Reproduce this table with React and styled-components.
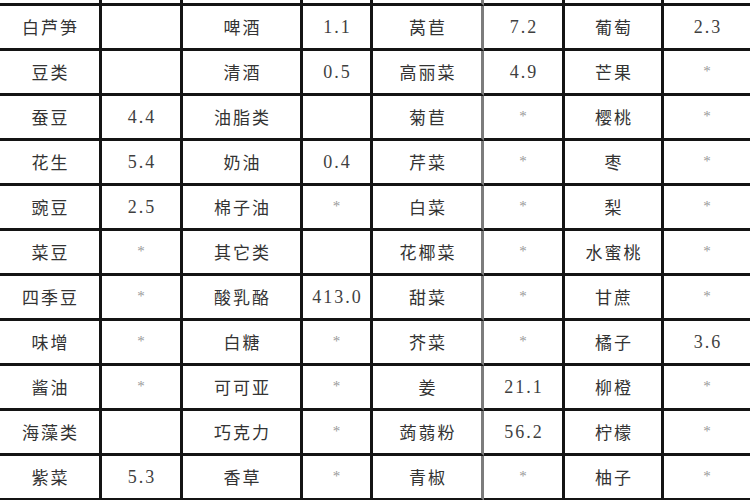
import React from 'react';
import styled, { createGlobalStyle } from 'styled-components';

const GlobalStyle = createGlobalStyle`
  html, body {
    margin: 0;
    padding: 0;
    background: #fff;
  }
  body {
    width: 750px;
    height: 500px;
    overflow: hidden;
  }
`;

// 列宽按参考图里竖线的位置量出来
const COLUMNS = [102, 81, 120, 70, 111, 81, 99, 86];

const rows = [
  ['白芦笋', '', '啤酒', '1.1', '莴苣', '7.2', '葡萄', '2.3'],
  ['豆类', '', '清酒', '0.5', '高丽菜', '4.9', '芒果', '*'],
  ['蚕豆', '4.4', '油脂类', '', '菊苣', '*', '樱桃', '*'],
  ['花生', '5.4', '奶油', '0.4', '芹菜', '*', '枣', '*'],
  ['豌豆', '2.5', '棉子油', '*', '白菜', '*', '梨', '*'],
  ['菜豆', '*', '其它类', '', '花椰菜', '*', '水蜜桃', '*'],
  ['四季豆', '*', '酸乳酪', '413.0', '甜菜', '*', '甘蔗', '*'],
  ['味增', '*', '白糖', '*', '芥菜', '*', '橘子', '3.6'],
  ['酱油', '*', '可可亚', '*', '姜', '21.1', '柳橙', '*'],
  ['海藻类', '', '巧克力', '*', '蒟蒻粉', '56.2', '柠檬', '*'],
  ['紫菜', '5.3', '香草', '*', '青椒', '*', '柚子', '*'],
];

const Sheet = styled.div`
  display: grid;
  grid-template-columns: ${COLUMNS.map((w) => `${w}px`).join(' ')};
  grid-template-rows: 6px;
  grid-auto-rows: 45px;
  width: 750px;
`;

const Cell = styled.div`
  box-sizing: border-box;
  display: flex;
  align-items: center;
  justify-content: center;
  border-bottom: 3px solid #141414;
  border-right: ${({ $last, $divider }) =>
    $last ? 'none' : $divider ? '3px solid #7c7c7c' : '3px solid #141414'};
  color: #333;
  white-space: nowrap;
  overflow: hidden;
`;

const Name = styled.span`
  font-family: "Noto Sans CJK SC", "Noto Sans", sans-serif;
  font-size: 17px;
  letter-spacing: 2px;
  padding-left: 2px;
  padding-bottom: 1px;
`;

const Value = styled.span`
  font-family: "Liberation Serif", serif;
  font-size: 18px;
  letter-spacing: 2px;
  padding-left: 2px;
  color: #3f3f3f;
`;

const Star = styled.span`
  font-family: "Liberation Serif", serif;
  font-size: 15px;
  color: #9a9a9a;
  padding-bottom: 2px;
`;

const CellText = ({ text }) => {
  if (!text) return null;
  if (text === '*') return <Star>*</Star>;
  if (/^[\d.]+$/.test(text)) return <Value>{text}</Value>;
  return <Name>{text}</Name>;
};

const App = () => (
  <>
    <GlobalStyle />
    <Sheet>
      {COLUMNS.map((_, i) => (
        <Cell key={`cut-${i}`} $last={i === 7} $divider={i === 4} />
      ))}
      {rows.map((row, r) =>
        row.map((text, c) => (
          <Cell key={`${r}-${c}`} $last={c === 7} $divider={c === 4}>
            <CellText text={text} />
          </Cell>
        ))
      )}
    </Sheet>
  </>
);

export default App;
